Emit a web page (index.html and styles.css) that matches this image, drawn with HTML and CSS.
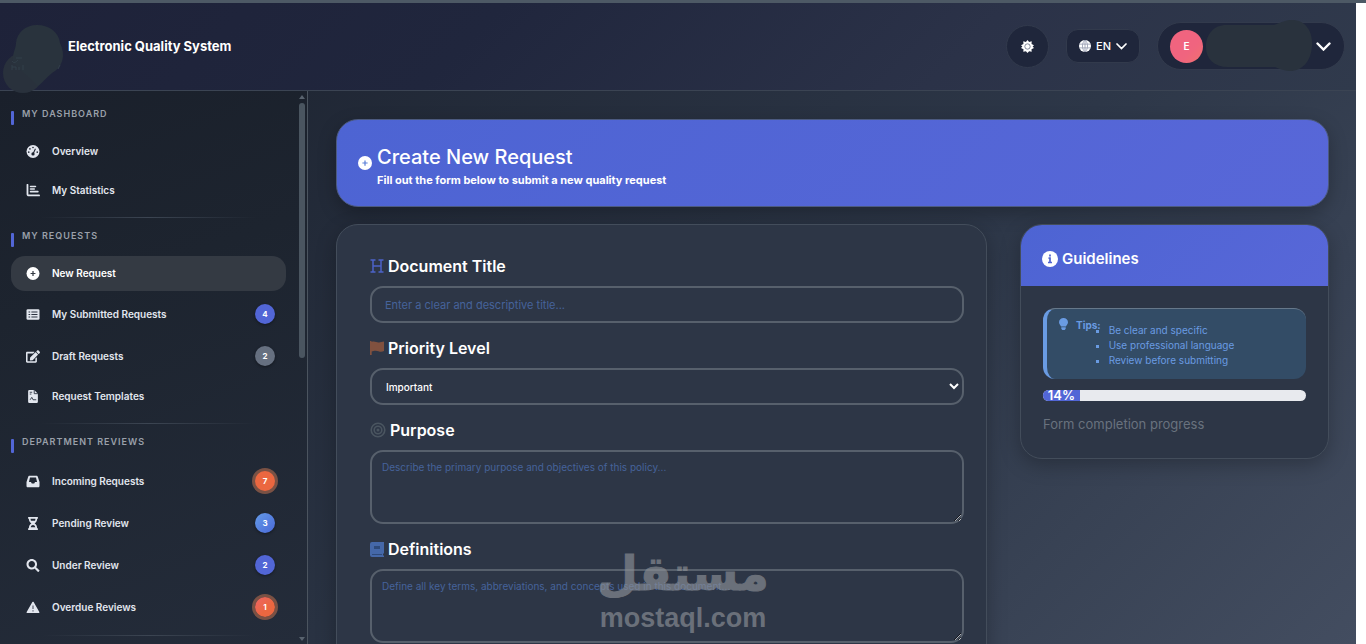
FILE: index.html
```html
<!DOCTYPE html>
<html lang="en">
<head>
  <meta charset="UTF-8">
  <title>Electronic Quality System</title>
  <link rel="stylesheet" href="styles.css">
</head>
<body>
  <div class="app">
    <header class="topbar">
      <svg class="logo" viewBox="0 0 60 42" aria-hidden="true">
        <circle cx="20" cy="48" r="20" fill="#29313c"/>
        <path d="M34 0c13 0 22 8 23 18 6 12 3 24-8 30-6 5-10 10-14 13L10 38c-1-10 3-14 3-20C14 8 22 0 34 0z" fill="#29333d"/>
        <path d="M9 36c2 3 4 1 6-1M13 33h6M9 40v5M9 42h4v3M16 42v3M20 40v5M57 40l-2 4" fill="none" stroke="#33404b" stroke-width="1"/>
      </svg>
      <h1 class="brand">Electronic Quality System</h1>
      <div class="topbar-actions">
        <button class="theme-btn" type="button" aria-label="Toggle theme">
          <svg width="13" height="13" viewBox="0 0 16 16"><path fill="currentColor" d="M8 0l2 2.600 3.200-1-.2 3.300L16 6.500 14.300 8 16 9.800l-3.100 1.500.3 3.300-3.200-.9L8 16l-2-2.300-3.200.9.300-3.300L0 9.800 1.700 8 0 6.500l3-1.600-.2-3.300 3.200 1z"/><circle cx="8" cy="8" r="3.300" fill="none" stroke="#6b7288" stroke-width="1"/></svg>
        </button>
        <button class="lang-btn" type="button">
          <svg width="12" height="12" viewBox="0 0 16 16"><circle cx="8" cy="8" r="8" fill="currentColor"/><path d="M0 5.500h16M0 10.500h16M8 0v16M8 0C3.500 4 3.500 12 8 16M8 0c4.500 4 4.500 12 0 16" fill="none" stroke="#8b92a8" stroke-width="1"/></svg>
          EN
          <svg width="11" height="7" viewBox="0 0 11 7"><path d="M1 1l4.500 4.500L10 1" fill="none" stroke="currentColor" stroke-width="1.700" stroke-linecap="round"/></svg>
        </button>
        <button class="user-btn" type="button" aria-label="User menu">
          <span class="avatar">E</span>
          <svg class="user-name" viewBox="0 0 107 34" aria-hidden="true"><path d="M20-4h48c8-3 12-5 18-5 14 0 21 12 20 26-1 16-10 24-20 25-8 0-12-2-17-4H22C8 38 0 30 0 18 0 5 8-4 20-4z" fill="#29323d"/></svg>
          <svg width="15" height="9" viewBox="0 0 15 9"><path d="M1.500 1.500l6 6 6-6" fill="none" stroke="currentColor" stroke-width="2.400" stroke-linecap="round"/></svg>
        </button>
      </div>
    </header>

    <div class="layout">
      <aside class="sidebar">
        <nav class="nav">
          <h2 class="nav-title">My Dashboard</h2>
          <ul class="nav-list">
            <li><a class="nav-link" href="#">
              <svg class="nav-icon" viewBox="0 0 16 16"><circle cx="8" cy="8" r="8" fill="currentColor"/><g fill="#1c232f"><circle cx="8" cy="3" r="1"/><circle cx="4.200" cy="4.800" r="1"/><circle cx="2.800" cy="8.800" r="1"/><circle cx="13.200" cy="8.800" r="1"/><circle cx="8" cy="11" r="2"/></g><path d="M8 11l3-6.500" stroke="#1c232f" stroke-width="1.300"/></svg>
              Overview</a></li>
            <li><a class="nav-link" href="#">
              <svg class="nav-icon" viewBox="0 0 16 16"><path d="M1.200 1v11.500a1.500 1.500 0 0 0 1.500 1.500H15.500" fill="none" stroke="currentColor" stroke-width="2.200" stroke-linecap="round"/><path d="M5 3h6M5 6.200h4.500M5 9.400h9" stroke="currentColor" stroke-width="2" stroke-linecap="round"/></svg>
              My Statistics</a></li>
          </ul>
          <hr class="divider">

          <h2 class="nav-title">My Requests</h2>
          <ul class="nav-list">
            <li><a class="nav-link active" href="#">
              <svg class="nav-icon" viewBox="0 0 16 16"><circle cx="8" cy="8" r="8" fill="currentColor"/><path d="M8 5v6M5 8h6" stroke="#333942" stroke-width="1.500"/></svg>
              New Request</a></li>
            <li><a class="nav-link" href="#">
              <svg class="nav-icon" viewBox="0 0 16 16"><rect y="1.500" width="16" height="13" rx="1.600" fill="currentColor"/><path d="M2.500 5h2M2.500 8h2M2.500 11h2M6 5h7.500M6 8h7.500M6 11h7.500" stroke="#2b3240" stroke-width="1.300"/></svg>
              My Submitted Requests <span class="badge">4</span></a></li>
            <li><a class="nav-link" href="#">
              <svg class="nav-icon" viewBox="0 0 576 512"><path fill="currentColor" d="M402.600 83.200l90.200 90.200c3.800 3.800 3.800 10 0 13.800L274.400 405.600l-92.800 10.300c-12.400 1.400-22.900-9.100-21.500-21.500l10.300-92.800L388.800 83.200c3.800-3.800 10-3.800 13.800 0zm162-22.900l-48.800-48.800c-15.200-15.200-39.900-15.200-55.200 0l-35.400 35.400c-3.800 3.800-3.800 10 0 13.800l90.200 90.200c3.800 3.800 10 3.800 13.800 0l35.400-35.400c15.200-15.300 15.200-40 0-55.200zM384 346.200V448H64V128h229.800c3.200 0 6.200-1.300 8.500-3.500l40-40c7.600-7.600 2.200-20.500-8.500-20.500H48C21.500 64 0 85.500 0 112v352c0 26.500 21.500 48 48 48h352c26.500 0 48-21.500 48-48V306.200c0-10.700-12.900-16-20.500-8.500l-40 40c-2.200 2.300-3.500 5.300-3.500 8.500z"/></svg>
              Draft Requests <span class="badge badge-gray">2</span></a></li>
            <li><a class="nav-link" href="#">
              <svg class="nav-icon" viewBox="0 0 16 16"><path d="M3.500 0H9.500l4.500 4.500V14.500a1.500 1.500 0 0 1-1.500 1.500h-9A1.500 1.500 0 0 1 2 14.500v-13A1.500 1.500 0 0 1 3.500 0z" fill="currentColor"/><path d="M4 2.800h3M4 5h2M9.500 0v4.500H14M4.500 12l2-3 1.500 3h4" fill="none" stroke="#2b3240" stroke-width="1.100"/></svg>
              Request Templates</a></li>
          </ul>
          <hr class="divider">

          <h2 class="nav-title">Department Reviews</h2>
          <ul class="nav-list">
            <li><a class="nav-link" href="#">
              <svg class="nav-icon" viewBox="0 0 16 16"><path fill="currentColor" fill-rule="evenodd" d="M3.800 1h8.400c.9 0 1.600.6 1.800 1.400L16 8.500v5c0 .9-.7 1.500-1.500 1.500h-13C.7 15 0 14.400 0 13.500v-5L2 2.400C2.200 1.600 2.900 1 3.800 1zM4.300 3.200L3 8.500h2.500l1 2h3l1-2H13l-1.300-5.300z"/></svg>
              Incoming Requests <span class="badge badge-alert">7</span></a></li>
            <li><a class="nav-link" href="#">
              <svg class="nav-icon" viewBox="0 0 16 16"><path fill="currentColor" fill-rule="evenodd" d="M2 0h12v2.300h-.9c0 2.600-1.200 4.600-3.100 5.700 1.900 1.100 3.100 3.100 3.100 5.700h.9V16H2v-2.300h.9C2.900 11.100 4.100 9.100 6 8 4.100 6.900 2.900 4.900 2.900 2.300H2zM5 2.300c0 .9.200 1.600.5 2.200h5c.3-.6.5-1.300.5-2.200zM5.200 12.500h5.600C10.400 10.800 9.400 9.800 8 9.800s-2.400 1-2.800 2.700z"/></svg>
              Pending Review <span class="badge badge-blue">3</span></a></li>
            <li><a class="nav-link" href="#">
              <svg class="nav-icon" viewBox="0 0 512 512"><path fill="currentColor" d="M505 442.700L405.300 343c-4.500-4.500-10.600-7-17-7H372c27.600-35.300 44-79.700 44-128C416 93.100 322.900 0 208 0S0 93.100 0 208s93.100 208 208 208c48.300 0 92.700-16.400 128-44v16.300c0 6.400 2.500 12.500 7 17l99.700 99.700c9.400 9.400 24.600 9.400 33.900 0l28.300-28.300c9.400-9.400 9.400-24.600.1-34zM208 336c-70.700 0-128-57.200-128-128 0-70.700 57.200-128 128-128 70.700 0 128 57.200 128 128 0 70.700-57.200 128-128 128z"/></svg>
              Under Review <span class="badge">2</span></a></li>
            <li><a class="nav-link" href="#">
              <svg class="nav-icon" viewBox="0 0 16 16"><path d="M8 1.800L15 14H1z" fill="currentColor" stroke="currentColor" stroke-width="1.800" stroke-linejoin="round"/><path d="M8 5.500v4.300M8 11.300v1.700" stroke="#5a6170" stroke-width="1.500"/></svg>
              Overdue Reviews <span class="badge badge-alert badge-pink">1</span></a></li>
          </ul>
          <hr class="divider">
        </nav>
        <div class="scroll-track">
          <svg width="6" height="4" viewBox="0 0 6 4"><path d="M0 4l3-4 3 4z" fill="#59636f"/></svg>
          <div class="scroll-thumb"></div>
          <svg class="scroll-down" width="6" height="4" viewBox="0 0 6 4"><path d="M0 0l3 4 3-4z" fill="#59636f"/></svg>
        </div>
      </aside>

      <main class="content">
        <section class="banner">
          <svg width="14" height="14" viewBox="0 0 16 16"><circle cx="8" cy="8" r="8" fill="#fff"/><path d="M8 5v6M5 8h6" stroke="#5a7fd8" stroke-width="1.400"/></svg>
          <div class="banner-copy">
            <h2 class="banner-title">Create New Request</h2>
            <p class="banner-text">Fill out the form below to submit a new quality request</p>
          </div>
        </section>

        <div class="columns">
          <form class="card form-card">
            <div class="field">
              <label class="field-label" for="title">
                <svg width="14" height="14" viewBox="0 0 14 14"><path d="M.5 1h5M8.500 1h5M.5 13h5M8.500 13h5M3 1v12M11 1v12M3 7h8" fill="none" stroke="#4c63c8" stroke-width="1.500"/></svg>
                Document Title</label>
              <input class="control" id="title" type="text" placeholder="Enter a clear and descriptive title...">
            </div>
            <div class="field">
              <label class="field-label" for="priority">
                <svg width="14" height="14" viewBox="0 0 14 14"><path d="M0 0h1.500v1C5-.5 7 2.300 10 1.200L14 .5v9.500c-4 2-6-1-9.500-.2L1.700 10.500V14H0z" fill="#80513f"/></svg>
                Priority Level</label>
              <select class="control" id="priority">
                <option>Important</option>
                <option>Normal</option>
                <option>Urgent</option>
              </select>
            </div>
            <div class="field">
              <label class="field-label" for="purpose">
                <svg width="16" height="16" viewBox="0 0 16 16"><g fill="none" stroke="#4a5560" stroke-width="1.600"><circle cx="8" cy="8" r="6.800"/><circle cx="8" cy="8" r="3.800"/></g><circle cx="8" cy="8" r="1.500" fill="#4a5560"/></svg>
                Purpose</label>
              <textarea class="control" id="purpose" placeholder="Describe the primary purpose and objectives of this policy..."></textarea>
            </div>
            <div class="field">
              <label class="field-label" for="definitions">
                <svg width="14" height="15" viewBox="0 0 14 15"><path d="M2 0h12v11.500h-1v2h1V15H2a2 2 0 0 1-2-2V2a2 2 0 0 1 2-2z" fill="#4568a8"/><path d="M4 4h6v3H4zM2 12h10v1H2z" fill="#2e4a7a"/></svg>
                Definitions</label>
              <textarea class="control" id="definitions" placeholder="Define all key terms, abbreviations, and concepts used in this document..."></textarea>
            </div>
          </form>

          <aside class="card guide-card">
            <h3 class="guide-head">
              <svg width="16" height="16" viewBox="0 0 16 16"><circle cx="8" cy="8" r="8" fill="#fff"/><path d="M8 3.500v2M6.500 7.200H8v4M6 11.500h4" fill="none" stroke="#4f63d0" stroke-width="1.700"/></svg>
              Guidelines</h3>
            <div class="guide-body">
              <div class="tips">
                <svg width="9" height="12" viewBox="0 0 9 12"><path d="M4.500 0C7 0 9 1.800 9 4.200 9 6 7.500 7 7 8.500H2C1.500 7 0 6 0 4.200 0 1.800 2 0 4.500 0zM2.300 9.300h4.400v1.500L5.700 12H3.300l-1-1.200z" fill="currentColor"/></svg>
                <strong>Tips:</strong>
                <ul class="tips-list">
                  <li>Be clear and specific</li>
                  <li>Use professional language</li>
                  <li>Review before submitting</li>
                </ul>
              </div>
              <div class="progress">
                <div class="progress-bar" style="width: 14%">14%</div>
              </div>
              <p class="progress-note">Form completion progress</p>
            </div>
          </aside>
        </div>
      </main>
    </div>
  </div>

  <div class="watermark">
    <span class="watermark-ar" lang="ar" dir="rtl">مستقل</span>
    <span class="watermark-en">mostaql.com</span>
  </div>
</body>
</html>
```

FILE: styles.css
```css
* { box-sizing: border-box; }
body {
  margin: 0;
  height: 100vh;
  overflow: hidden;
  background: #fff;
  border-top: 3px solid #4d5965;
  font-family: Inter, "Liberation Sans", sans-serif;
  color: #fff;
  position: relative;
}
h1, h2, h3, p, ul { margin: 0; padding: 0; }
ul { list-style: none; }
button { font-family: inherit; color: inherit; cursor: pointer; }
svg { flex: none; display: block; }

.app {
  margin-right: 10px;
  height: 100%;
  display: flex;
  flex-direction: column;
  background: linear-gradient(135deg, #1a202c 0%, #2d3748 60%, #434d60 100%);
}

/* header */
.topbar {
  display: flex;
  align-items: center;
  height: 88px;
  flex: none;
  padding: 0 11px 1px 3px;
  background: linear-gradient(135deg, #1e2239 0%, #20263d 35%, #2b3248 70%, #303a4c 100%);
  border-bottom: 1px solid #3b4453;
}
.logo {
  width: 60px;
  height: 42px;
  overflow: visible;
  position: relative;
}
.brand {
  margin-left: 5px;
  font-size: 13px;
  font-weight: 700;
}
.topbar-actions {
  margin-left: auto;
  display: flex;
  align-items: center;
  gap: 17px;
}
.theme-btn, .lang-btn, .user-btn {
  display: flex;
  align-items: center;
  background: #1f263b;
  border: 1px solid #323a4c;
}
.theme-btn {
  width: 43px;
  height: 43px;
  justify-content: center;
  border-radius: 50%;
  padding: 0;
}
.lang-btn {
  height: 34px;
  gap: 5px;
  padding: 0 12px;
  border-radius: 12px;
  font-size: 11px;
  font-weight: 500;
}
.user-btn {
  height: 48px;
  gap: 3px;
  padding: 0 13px 0 12px;
  border-radius: 24px;
}
.avatar {
  width: 33px;
  height: 33px;
  line-height: 33px;
  border-radius: 50%;
  background: linear-gradient(135deg, #f0647f 60%, #f07070);
  font-size: 10px;
  font-weight: 600;
}
.user-name {
  width: 107px;
  height: 34px;
  overflow: visible;
}

.layout {
  flex: 1;
  min-height: 0;
  display: flex;
}

/* sidebar */
.sidebar {
  width: 308px;
  flex: none;
  display: flex;
  background: linear-gradient(160deg, #1a202b 0%, #1d242f 35%, #242c3a 100%);
  border-right: 1px solid #4b545f;
  overflow: hidden;
}
.nav {
  flex: 1;
  padding: 16px 10px 0 11px;
}
.nav-title {
  position: relative;
  padding: 0 0 8px 11px;
  margin-bottom: 5px;
  font-size: 9px;
  line-height: 14px;
  font-weight: 600;
  letter-spacing: 1px;
  text-transform: uppercase;
  color: #9aa0aa;
}
.nav-title::before {
  content: "";
  position: absolute;
  left: 0;
  top: 4px;
  width: 3px;
  height: 14px;
  border-radius: 1px;
  background: #5266d6;
}
.nav-list {
  display: flex;
  flex-direction: column;
  gap: 4px;
}
.nav-link {
  display: flex;
  align-items: center;
  gap: 12px;
  padding: 9px 11px 9px 15px;
  border-radius: 14px;
  color: #e2e6ee;
  font-size: 10px;
  line-height: 17px;
  font-weight: 600;
  text-decoration: none;
}
.nav-link.active {
  background: #343a43;
  color: #fff;
}
.nav-icon {
  width: 14px;
  height: 13px;
}
.badge {
  margin-left: auto;
  width: 20px;
  height: 20px;
  border-radius: 50%;
  background: #5266d6;
  box-shadow: 0 1px 3px rgba(0, 0, 0, 0.4);
  color: #fff;
  font-size: 8px;
  line-height: 20px;
  font-weight: 700;
  text-align: center;
}
.badge-gray { background: #667080; }
.badge-blue { background: linear-gradient(135deg, #649be8, #4a69d8); }
.badge-alert {
  background: #eb6740;
  box-shadow: 0 0 0 3px #7a5144;
}
.badge-pink { background: linear-gradient(135deg, #ee6565, #eb6740 60%); }
.divider {
  height: 1px;
  margin: 9px 30px 11px;
  border: 0;
  background: linear-gradient(90deg, transparent, #3c4552, transparent);
}
.scroll-track {
  width: 11px;
  display: flex;
  flex-direction: column;
  align-items: center;
  padding: 4px 0 3px;
  gap: 4px;
}
.scroll-thumb {
  width: 6px;
  height: 255px;
  border-radius: 3px;
  background: #4a5560;
}
.scroll-down { margin-top: auto; }

/* main area */
.content {
  flex: 1;
  min-width: 0;
  padding: 28px 27px 28px 28px;
}
.banner {
  display: flex;
  align-items: center;
  gap: 5px;
  height: 88px;
  padding: 0 21px;
  border: 1px solid #4c5a80;
  border-radius: 22px;
  background: linear-gradient(135deg, #4d64d3, #5867d8);
  box-shadow: 0 6px 18px rgba(0, 0, 0, 0.25);
}
.banner-copy { padding-top: 8px; }
.banner-title {
  font-size: 20px;
  line-height: 26px;
  font-weight: 500;
}
.banner-text {
  font-size: 11px;
  line-height: 20px;
  font-weight: 700;
}
.columns {
  display: flex;
  align-items: flex-start;
  gap: 33px;
  margin-top: 17px;
}
.card {
  border: 1px solid #434d5b;
  border-radius: 22px;
  background: #2d3646;
  box-shadow: 0 6px 20px rgba(0, 0, 0, 0.25);
}
.form-card {
  flex: 1;
  min-width: 0;
  padding: 29px 22px 29px 33px;
}
.field {
  display: flex;
  flex-direction: column;
  gap: 8px;
  margin-bottom: 13px;
}
.field-label {
  display: flex;
  align-items: center;
  gap: 4px;
  font-size: 16px;
  line-height: 24px;
  font-weight: 600;
}
.control {
  width: 100%;
  height: 37px;
  padding: 0 13px;
  border: 2px solid #57606c;
  border-radius: 13px;
  background-color: transparent;
  color: #fff;
  font-family: inherit;
  font-size: 11px;
}
select.control {
  padding: 0 4px 0 10px;
  font-size: 10px;
  font-weight: 500;
}
select.control option { background: #2d3646; }
textarea.control {
  display: block;
  height: 74px;
  padding: 9px 10px;
  font-size: 10px;
  resize: vertical;
}
.control::placeholder { color: #46639b; }

/* guidelines card */
.guide-card {
  width: 309px;
  flex: none;
  overflow: hidden;
}
.guide-head {
  display: flex;
  align-items: center;
  gap: 4px;
  height: 61px;
  padding: 6px 21px 0;
  background: linear-gradient(135deg, #4d64d3, #5867d8);
  font-size: 15px;
  font-weight: 600;
}
.guide-body { padding: 22px; }
.tips {
  display: flex;
  align-items: flex-start;
  height: 71px;
  padding: 9px 12px;
  border-top: 1px solid #66788a;
  border-left: 4px solid #6a9be2;
  border-radius: 12px;
  background: #334c66;
  color: #6a9be2;
  font-size: 10px;
  line-height: 15px;
  font-weight: 400;
}
.tips strong { margin-left: 8px; }
.tips-list {
  margin-top: 5px;
  padding-left: 8px;
  list-style: square;
}
.progress {
  height: 11px;
  margin-top: 11px;
  border-radius: 6px;
  background: #e8eaee;
  overflow: hidden;
}
.progress-bar {
  height: 100%;
  background: #5266d6;
  font-size: 13px;
  line-height: 11px;
  font-weight: 600;
  text-align: center;
}
.progress-note {
  margin: 13px 0 2px;
  font-size: 13px;
  line-height: 20px;
  color: #69727e;
}

.watermark {
  position: absolute;
  left: 50%;
  bottom: 10px;
  transform: translateX(-50%);
  display: flex;
  flex-direction: column;
  align-items: center;
  gap: 4px;
  color: #8c9096;
  opacity: 0.65;
  font-weight: 700;
  pointer-events: none;
}
.watermark-ar {
  font-family: "DejaVu Sans", sans-serif;
  font-size: 47px;
  line-height: 48px;
  -webkit-text-stroke: 1px #8c9096;
}
.watermark-en {
  font-family: "Liberation Sans", sans-serif;
  font-size: 27px;
  line-height: 32px;
}
```
